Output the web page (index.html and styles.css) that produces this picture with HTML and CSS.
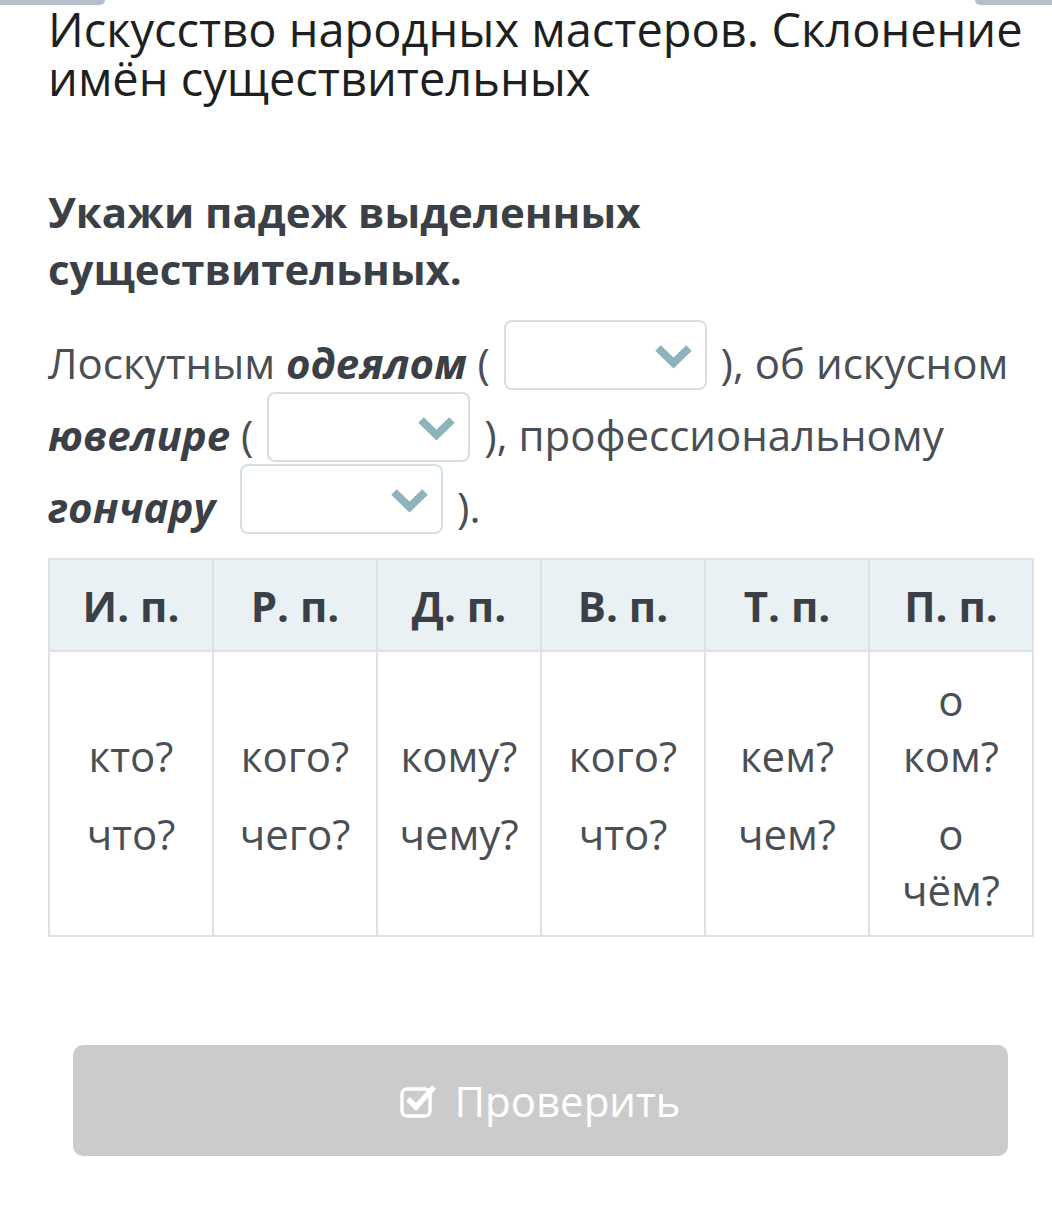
FILE: index.html
```html
<!DOCTYPE html>
<html lang="ru">
<head>
<meta charset="utf-8">
<title>Склонение имён существительных</title>
<link rel="stylesheet" href="styles.css">
</head>
<body>
<div class="topbar"><span class="tab tab-left"></span><span class="tab tab-right"></span></div>
<main class="page">
  <h1 class="title">Искусство народных мастеров. Склонение имён существительных</h1>
  <h2 class="task">Укажи падеж выделенных существительных.</h2>
  <p class="sentence">Лоскутным <b class="word">одеялом</b> ( <span class="select"><svg class="chev" viewBox="0 0 37 25"><path d="M3 3 L18.5 18 L34 3" fill="none" stroke="#8db4ba" stroke-width="8"/></svg></span> ), об искусном <b class="word">ювелире</b> ( <span class="select"><svg class="chev" viewBox="0 0 37 25"><path d="M3 3 L18.5 18 L34 3" fill="none" stroke="#8db4ba" stroke-width="8"/></svg></span> ), профессиональному <b class="word">гончару</b>&nbsp; <span class="select"><svg class="chev" viewBox="0 0 37 25"><path d="M3 3 L18.5 18 L34 3" fill="none" stroke="#8db4ba" stroke-width="8"/></svg></span> ).</p>
  <table class="cases">
    <thead>
      <tr><th>И. п.</th><th>Р. п.</th><th>Д. п.</th><th>В. п.</th><th>Т. п.</th><th>П. п.</th></tr>
    </thead>
    <tbody>
      <tr>
        <td><p>кто?</p><p>что?</p></td>
        <td><p>кого?</p><p>чего?</p></td>
        <td><p>кому?</p><p>чему?</p></td>
        <td><p>кого?</p><p>что?</p></td>
        <td><p>кем?</p><p>чем?</p></td>
        <td><p>о ком?</p><p>о чём?</p></td>
      </tr>
    </tbody>
  </table>
  <div class="actions">
    <button class="check" type="button"><svg class="check-icon" viewBox="0 0 38 34"><rect x="2" y="5" width="28" height="27" rx="5" fill="none" stroke="#fff" stroke-width="3.5"/><path d="M8 15 L16 23 L34 3" fill="none" stroke="#fff" stroke-width="5.5"/></svg><span>Проверить</span></button>
  </div>
</main>
</body>
</html>
```
FILE: styles.css
```css
html, body {
  margin: 0;
  padding: 0;
  background: #ffffff;
}
body {
  font-family: "Open Sans", "Noto Sans", sans-serif;
  color: #4a4f55;
}
.topbar {
  display: flex;
  justify-content: space-between;
  height: 5px;
  overflow: hidden;
}
.tab {
  display: block;
  height: 5px;
  background: #b3bfca;
}
.tab-left {
  width: 105px;
  border-bottom-right-radius: 6px;
}
.tab-right {
  width: 77px;
  border-bottom-left-radius: 6px;
}
.page {
  padding: 0 19px 0 48px;
}
.title {
  margin: 0;
  font-size: 47px;
  line-height: 49px;
  font-weight: 400;
  color: #1e1f21;
}
.task {
  margin: 80px 0 0;
  font-size: 42px;
  line-height: 57px;
  font-weight: 700;
  color: #3b4047;
}
.sentence {
  margin: 22px 0 0;
  font-size: 42px;
  line-height: 56px;
  color: #4a4f55;
}
.word {
  font-style: italic;
  font-weight: 700;
  color: #3b4047;
}
.select {
  display: inline-block;
  overflow: hidden;
  box-sizing: border-box;
  width: 203px;
  height: 70px;
  margin: 1px 3px;
  border: 2px solid #d3dfe1;
  border-radius: 8px;
  vertical-align: -12px;
}
.chev {
  display: block;
  width: 37px;
  height: 25px;
  margin: 23px 13px 0 auto;
}
.cases {
  margin-top: 23px;
  width: 986px;
  border-collapse: collapse;
  table-layout: fixed;
  font-size: 42px;
  color: #4a4f55;
}
.cases th, .cases td {
  border: 2px solid #dce3e6;
  text-align: center;
}
.cases th {
  height: 90px;
  background: #eaf1f5;
  font-weight: 700;
  color: #3b4047;
  padding: 0;
}
.cases td {
  padding: 20px 20px 17px;
  vertical-align: middle;
  line-height: 56px;
}
.cases td p {
  margin: 0;
}
.cases td p + p {
  margin-top: 22px;
}
.actions {
  padding: 108px 25px 0;
}
.check {
  display: flex;
  align-items: center;
  justify-content: center;
  gap: 16px;
  width: 100%;
  height: 111px;
  border: none;
  border-radius: 10px;
  background: #cbcbcb;
  color: #ffffff;
  font-family: "Open Sans", "Noto Sans", sans-serif;
  font-size: 42px;
  padding: 0;
}
.check-icon {
  width: 38px;
  height: 34px;
}
```
